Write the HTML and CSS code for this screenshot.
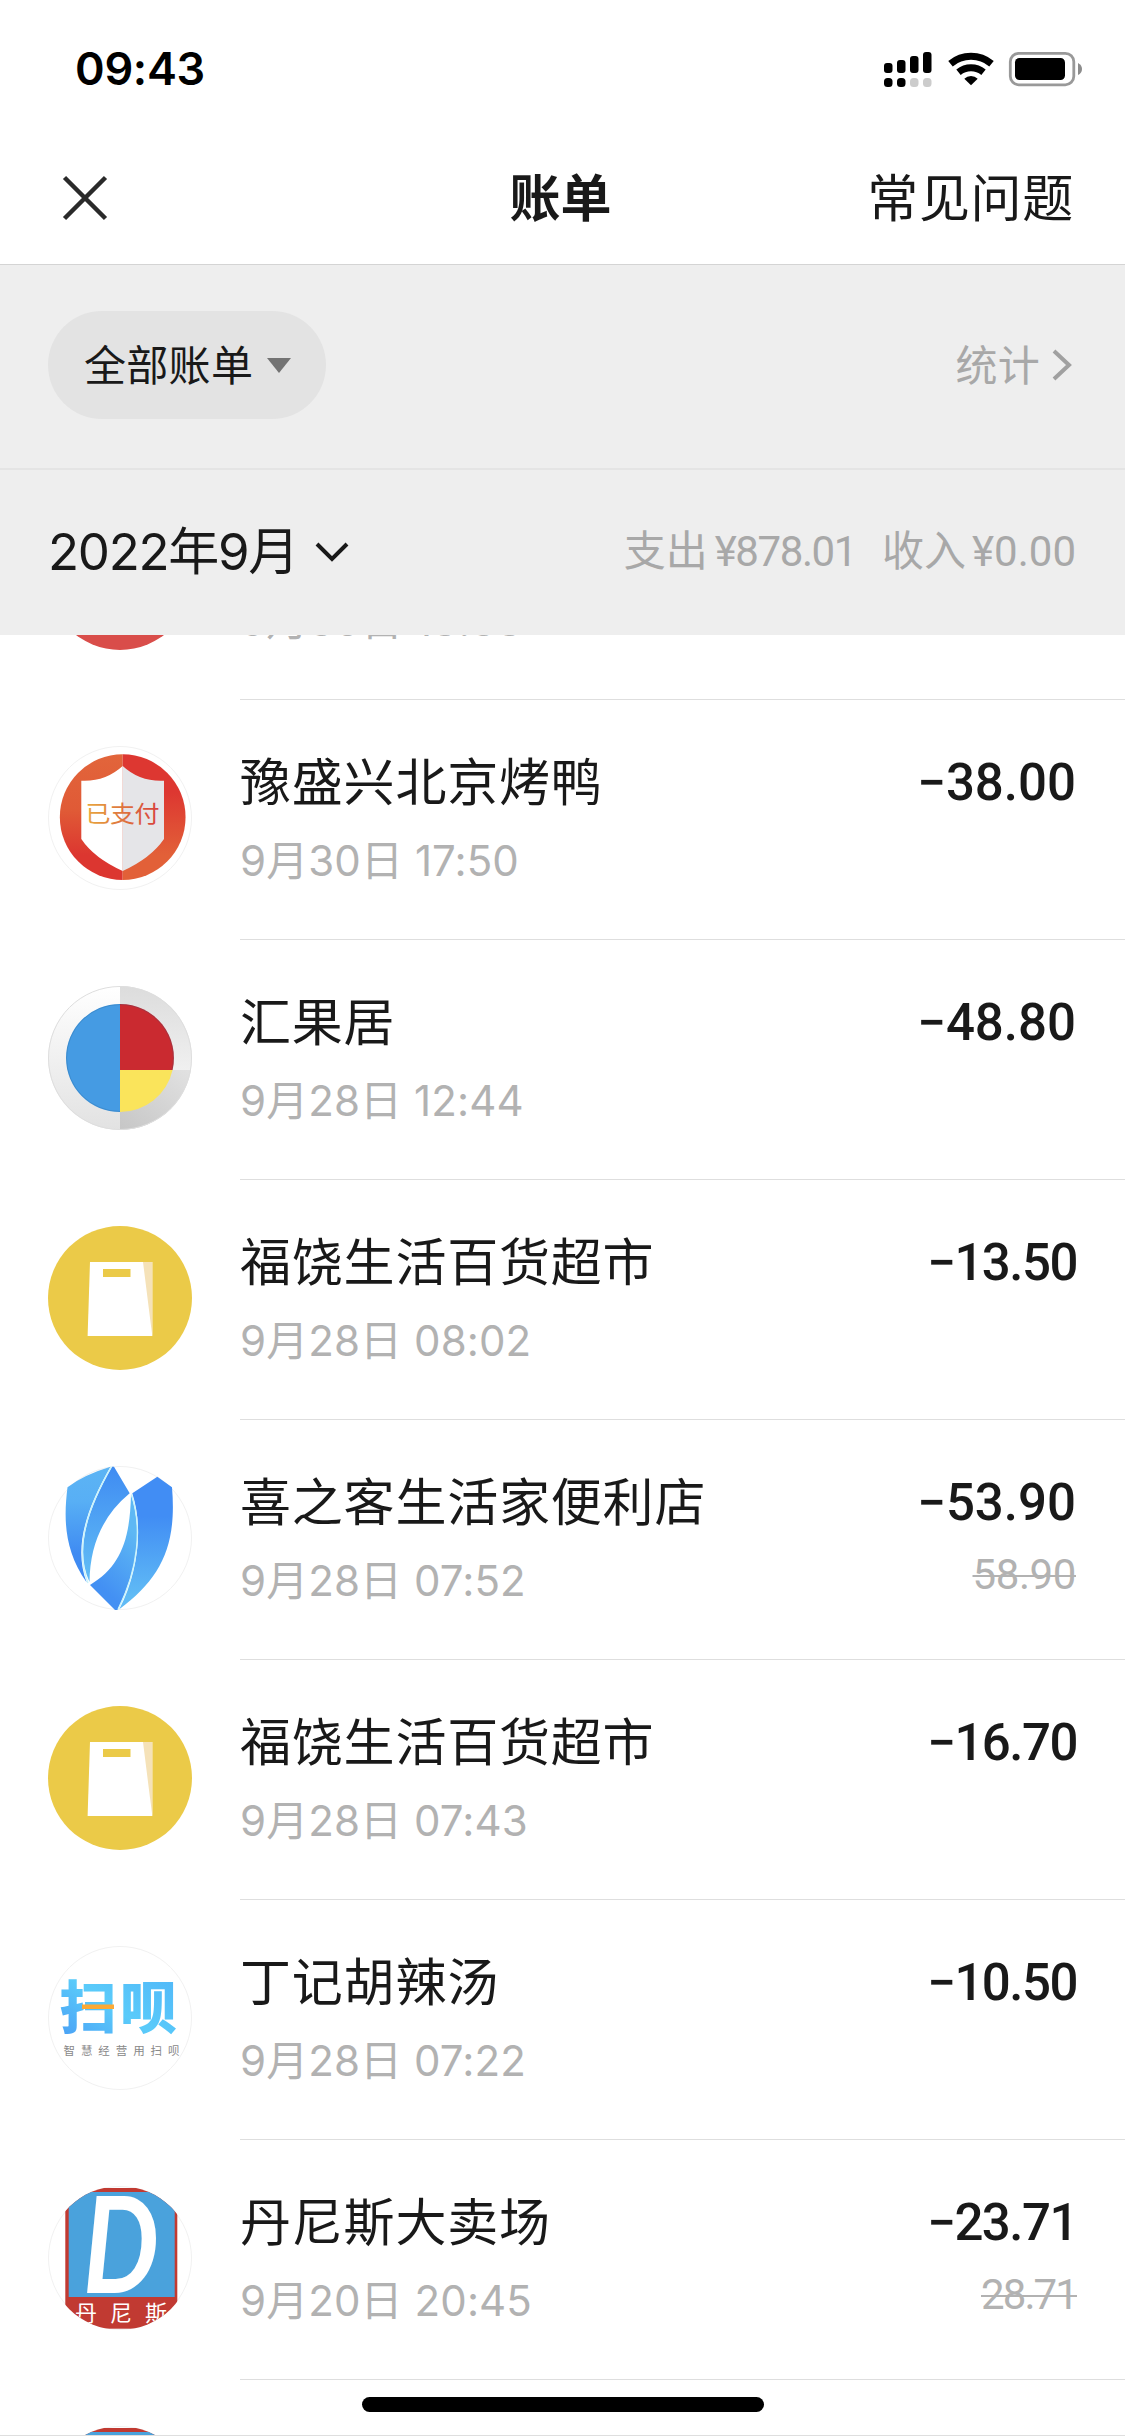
FILE: index.html
```html
<!DOCTYPE html>
<html lang="zh-CN">
<head>
<meta charset="utf-8">
<title>账单</title>
<link rel="stylesheet" href="styles.css">
</head>
<body>
<svg class="defs" aria-hidden="true">
  <defs>
    <linearGradient id="ringL" x1="0" y1="0" x2="0" y2="1"><stop offset="0" stop-color="#e2653b"/><stop offset=".45" stop-color="#e05a36"/><stop offset=".8" stop-color="#dc3630"/></linearGradient>
    <linearGradient id="ringR" x1="0" y1="0" x2="0" y2="1"><stop offset=".3" stop-color="#dd3731"/><stop offset=".8" stop-color="#e26038"/></linearGradient>
    <linearGradient id="paid"><stop offset="0" stop-color="#e9a83e"/><stop offset=".45" stop-color="#df7a3e"/><stop offset="1" stop-color="#d8403c"/></linearGradient>
    <linearGradient id="greyL" x1="0" y1="0" x2="0" y2="1"><stop offset="0" stop-color="#ffffff"/><stop offset="1" stop-color="#e2e2e2"/></linearGradient>
    <linearGradient id="greyR" x1="0" y1="0" x2="0" y2="1"><stop offset="0" stop-color="#dcdcdc"/><stop offset="1" stop-color="#f0f0f0"/></linearGradient>
    <linearGradient id="greyB" x1="1" y1="0" x2="0" y2="1"><stop offset="0" stop-color="#e2e2e2"/><stop offset="1" stop-color="#c6c6c6"/></linearGradient>
    <linearGradient id="leafA" x1="0" y1="0" x2="0" y2="1"><stop offset="0" stop-color="#5cb4f4"/><stop offset=".3" stop-color="#58aff5"/><stop offset=".75" stop-color="#3f8bf2"/></linearGradient>
    <linearGradient id="leafB" x1="0" y1="0" x2="0" y2="1"><stop offset="0" stop-color="#3f8bf2"/><stop offset=".9" stop-color="#5fbaf5"/></linearGradient>
    <linearGradient id="leafC" x1="0" y1="0" x2="0" y2="1"><stop offset=".3" stop-color="#418df4"/><stop offset=".9" stop-color="#60bbf5"/></linearGradient>
    <linearGradient id="leafD" x1=".7" y1="0" x2=".3" y2="1"><stop offset=".2" stop-color="#5eb8f4"/><stop offset=".85" stop-color="#4390f3"/></linearGradient>
    <linearGradient id="saobei" x1="0" y1="1" x2="1" y2="0"><stop offset="0" stop-color="#489bf5"/><stop offset=".45" stop-color="#5acbfa"/><stop offset="1" stop-color="#4fb4f8"/></linearGradient>
    <clipPath id="disc"><circle cx="72" cy="72" r="72"/></clipPath>
    <symbol id="bag" viewBox="0 0 144 144">
      <circle cx="72" cy="72" r="72" fill="#ebca48"/>
      <path d="M42 36H104.3V110H39.6Z" fill="#fff"/>
      <path d="M95 36H104.3V110Z" fill="#f5e2b8"/>
      <path d="M55 43H82.5V51H55Z" fill="#ebca48"/>
    </symbol>
    <symbol id="dennis" viewBox="0 0 144 144">
      <circle class="rim" cx="72" cy="72" r="71.5"/>
      <g clip-path="url(#disc)">
        <rect x="17.3" y="2" width="112" height="140.7" fill="#c13a32"/>
        <rect x="20.7" y="6" width="106" height="105" fill="#4aa2dc"/>
        <text class="dennis-d" transform="translate(35 107) scale(.8 1)">D</text>
        <text class="dennis-name" x="27 62 97" y="135">丹尼斯</text>
      </g>
    </symbol>
  </defs>
</svg>

<div class="screen">
  <header class="status">
    <span class="time">09:43</span>
    <svg class="indicators" viewBox="0 0 200 36" width="200" height="36">
      <rect x="1" y="12" width="8.5" height="10" rx="3"/><rect x="14" y="9" width="8.5" height="13" rx="3"/><rect x="27" y="5" width="8.5" height="17" rx="3"/><rect x="40" y="1" width="8.5" height="21" rx="3"/>
      <rect x="1" y="27" width="8.5" height="9" rx="3.5"/><rect x="14" y="27" width="8.5" height="9" rx="3.5"/><rect x="27" y="27" width="8.5" height="9" rx="3.5" fill="#ccc"/><rect x="40" y="27" width="8.5" height="9" rx="3.5" fill="#ccc"/>
      <g fill="none" stroke="#000" stroke-width="7"><path d="M67.5 12.7A32 32 0 0 1 108.5 12.7"/><path d="M75.5 21.2A20 20 0 0 1 100.5 21.2"/></g>
      <path d="M88 34.3L81.3 27.7A9.8 9.8 0 0 1 94.7 27.7Z"/>
      <rect x="127.3" y="2.3" width="63.5" height="31.5" rx="8.5" fill="none" stroke="#999" stroke-width="2.8"/>
      <rect x="132" y="7" width="50" height="22" rx="4.5"/>
      <path d="M195 12Q199 14 199 18T195 24Z" fill="#8c8c8c"/>
    </svg>
  </header>
  <nav class="nav">
    <svg class="close" viewBox="0 0 46 46" width="46" height="46"><path d="M2.5 2.5L43.5 43.5M43.5 2.5L2.5 43.5"/></svg>
    <h1 class="heading">账单</h1>
    <span class="faq">常见问题</span>
  </nav>
  <section class="filter">
    <div class="pill"><span>全部账单</span><svg width="24" height="15" viewBox="0 0 24 15"><path d="M0 0H24L12 15Z" fill="#737373"/></svg></div>
    <div class="stats"><span>统计</span><svg width="20" height="32" viewBox="0 0 20 32"><path d="M2 2L17 16L2 30"/></svg></div>
  </section>
  <section class="summary">
    <div class="month"><span>2022年9月</span><svg width="34" height="20" viewBox="0 0 34 20"><path d="M2 2L17 17L32 2"/></svg></div>
    <div class="totals"><span>支出<b class="num narrow">¥878.01</b></span><span>收入<b class="num">¥0.00</b></span></div>
  </section>

  <main class="list">
    <article class="row first">
      <svg class="logo" viewBox="0 0 144 144"><circle cx="72" cy="72" r="72" fill="#d94d4a"/></svg>
      <div class="body"><div class="info"><p class="name"></p><p class="date">9月30日 18:38</p></div></div>
    </article>
    <article class="row">
      <svg class="logo" viewBox="0 0 144 144">
        <circle class="rim" cx="72" cy="72" r="71.5"/>
        <path d="M74.7 8.3A62.8 62.8 0 0 0 74.7 134Z" fill="url(#ringL)"/><path d="M74.7 8.3A62.8 62.8 0 0 1 74.7 134Z" fill="url(#ringR)"/>
        <path d="M74.7 20Q57 36 33.3 34.7V93Q46 112 74.7 125Z" fill="#fff"/><path d="M74.7 20Q92 36 116 34.7V93Q103 112 74.7 125Z" fill="#e5e5e8"/>
        <text class="paid" transform="translate(37.5 75.5) scale(1 .9)" textLength="74" fill="url(#paid)">已支付</text>
      </svg>
      <div class="body"><div class="info"><p class="name">豫盛兴北京烤鸭</p><p class="date">9月30日 17:50</p></div><div class="amount"><p class="cost">−38.00</p></div></div>
    </article>
    <article class="row">
      <svg class="logo" viewBox="0 0 144 144">
        <g clip-path="url(#disc)"><path d="M0 0H72V144H0Z" fill="url(#greyL)"/><path d="M72 0H144V84H72Z" fill="url(#greyR)"/><path d="M72 84H144V144H72Z" fill="url(#greyB)"/></g>
        <path d="M72 18A54 54 0 0 0 72 126Z" fill="#459be3"/><path d="M72 18A54 54 0 0 1 124.6 84H72Z" fill="#ca2a30"/><path d="M72 84H124.6A54 54 0 0 1 72 126Z" fill="#fae45b"/>
        <path d="M72 125.5A53.5 53.5 0 0 1 72 18.5A53.5 53.5 0 0 1 124 84" fill="none" stroke="#1d5080" stroke-opacity=".22"/>
        <circle class="rim dark" cx="72" cy="72" r="71.5"/>
      </svg>
      <div class="body"><div class="info"><p class="name">汇果居</p><p class="date">9月28日 12:44</p></div><div class="amount"><p class="cost">−48.80</p></div></div>
    </article>
    <article class="row">
      <svg class="logo"><use href="#bag"/></svg>
      <div class="body"><div class="info"><p class="name">福饶生活百货超市</p><p class="date">9月28日 08:02</p></div><div class="amount"><p class="cost narrow">−13.50</p></div></div>
    </article>
    <article class="row">
      <svg class="logo" viewBox="0 0 144 144">
        <circle class="rim" cx="72" cy="72" r="71.5"/>
        <path d="M62.5 .7Q35 9 19.5 21.3C16 50 15 83 38.7 116.5C27 86 34 50 62.5 .7Z" fill="url(#leafA)"/>
        <path d="M66 .7L81.7 27.3Q42 60 41.5 116C28 86 36 50 64 .7Z" fill="url(#leafB)"/>
        <path d="M84.3 27.3L109.3 10.7L124 21.3C129 80 113 112 71.3 143.3C91 105 95 60 84.3 27.3Z" fill="url(#leafC)"/>
        <path d="M83 28.5C82 75 72 101 42 119L67 144H69.5C91 100 94 62 83 28.5Z" fill="url(#leafD)"/>
        <path d="M63.5 .7C35 50 28 86 40 117M83.5 28.5C94 60 91 102 70 143.5" fill="none" stroke="#c9f3fa" stroke-width="1.4"/>
      </svg>
      <div class="body"><div class="info"><p class="name">喜之客生活家便利店</p><p class="date">9月28日 07:52</p></div><div class="amount"><p class="cost">−53.90</p><p class="original">58.90</p></div></div>
    </article>
    <article class="row">
      <svg class="logo"><use href="#bag"/></svg>
      <div class="body"><div class="info"><p class="name">福饶生活百货超市</p><p class="date">9月28日 07:43</p></div><div class="amount"><p class="cost narrow">−16.70</p></div></div>
    </article>
    <article class="row">
      <svg class="logo" viewBox="0 0 144 144">
        <circle class="rim" cx="72" cy="72" r="71.5"/>
        <text class="saobei" x="11.5 72" y="81.5" fill="url(#saobei)">扫呗</text>
        <path d="M34 58.5H66V63H34Z" fill="#fba935"/>
        <text class="slogan" x="15.5" y="108.7" textLength="116">智慧经营用扫呗</text>
      </svg>
      <div class="body"><div class="info"><p class="name">丁记胡辣汤</p><p class="date">9月28日 07:22</p></div><div class="amount"><p class="cost narrow">−10.50</p></div></div>
    </article>
    <article class="row">
      <svg class="logo"><use href="#dennis"/></svg>
      <div class="body"><div class="info"><p class="name">丹尼斯大卖场</p><p class="date">9月20日 20:45</p></div><div class="amount"><p class="cost narrow">−23.71</p><p class="original narrow">28.71</p></div></div>
    </article>
    <article class="row">
      <svg class="logo"><use href="#dennis"/></svg>
      <div class="body"></div>
    </article>
  </main>
  <div class="home-indicator"></div>
</div>
</body>
</html>
```
FILE: styles.css
```css
* { box-sizing: border-box; margin: 0; padding: 0; }
body { background: #fff; }
.defs { position: absolute; width: 0; height: 0; }
.screen {
  position: relative;
  display: flex;
  flex-direction: column;
  width: 1125px;
  height: 2436px;
  overflow: hidden;
  color: #191919;
  background: #fff;
  border-bottom: 1px solid #dedede;
  font-family: Inter, "Noto Sans CJK SC", sans-serif;
  font-size: 42px;
  white-space: nowrap;
}
.status {
  flex: none;
  display: flex;
  justify-content: space-between;
  align-items: flex-start;
  height: 132px;
  padding: 51px 42px 0 75px;
}
.time { font-size: 45px; font-weight: 600; line-height: 36px; color: #000; letter-spacing: -.3px; }
.nav {
  flex: none;
  display: grid;
  grid-template-columns: 1fr auto 1fr;
  align-items: center;
  height: 133px;
  padding: 0 51px 0 62px;
  border-bottom: 1px solid #d4d4d4;
  font-size: 51px;
  line-height: 60px;
}
.close { fill: none; stroke: #2a2a2a; stroke-width: 4.5; }
.heading { font-size: 51px; font-weight: 600; padding-top: 2px; margin: 0 4px 0 -11px; }
.faq { justify-self: end; padding-top: 2px; letter-spacing: .7px; }
.filter, .summary {
  flex: none;
  display: flex;
  justify-content: space-between;
  background: #eee;
}
.filter { height: 205px; padding: 46px 53px 0 48px; border-bottom: 2px solid #e4e4e4; }
.pill {
  display: flex;
  align-items: center;
  gap: 14px;
  width: 278px;
  height: 108px;
  padding-left: 36px;
  border-radius: 54px;
  background: #e3e3e3;
}
.pill span, .stats span { padding-bottom: 5px; letter-spacing: .3px; }
.stats {
  display: flex;
  align-items: center;
  gap: 12px;
  height: 108px;
  color: #a8a8a8;
}
.stats path, .month path { fill: none; stroke: #a0a0a0; stroke-width: 4; }
.summary { height: 165px; padding: 50px 49px 0 48px; line-height: 64px; }
.month { display: flex; align-items: center; gap: 17px; height: 64px; font-size: 51px; letter-spacing: -1.3px; }
.month path { stroke: #191919; }
.totals { display: flex; gap: 26px; height: 64px; color: #a8a8a8; }
.totals span { margin-top: -1px; }
.num { margin-left: 6px; font-family: Roboto, sans-serif; font-weight: 400; }
.num.narrow { margin-left: 7px; letter-spacing: -1.4px; }
.list { flex: none; height: 1801px; overflow: hidden; }
.row { display: flex; height: 240px; padding-left: 48px; }
.first { margin-top: -175px; }
.logo { flex: none; width: 144px; height: 144px; margin: 46px 48px 0 0; }
.body {
  flex: 1;
  display: flex;
  justify-content: space-between;
  padding: 53px 49px 0 0;
  border-bottom: 1px solid #dedede;
}
.name { height: 60px; font-size: 51px; line-height: 60px; letter-spacing: .8px; }
.date { margin-top: 21px; color: #b2b2b2; line-height: 54px; letter-spacing: .1px; }
.amount { text-align: right; font-family: Roboto, sans-serif; }
.cost { font-size: 51px; font-weight: 500; line-height: 60px; }
.cost.narrow { letter-spacing: -1.5px; margin-right: -1px; }
.original { margin-top: 15px; color: #b2b2b2; line-height: 54px; letter-spacing: -.4px; text-decoration: line-through; text-decoration-thickness: 2px; }
.original.narrow { letter-spacing: -1.9px; margin-right: -1px; }
.rim { fill: #fff; stroke: #f1f1f1; stroke-width: 1; }
.rim.dark { fill: none; stroke: #dedede; }
.paid { font: 400 25px "Noto Sans CJK SC", sans-serif; }
.saobei { font: 900 57px "Noto Sans CJK SC", sans-serif; }
.slogan { font: 400 11.5px "Noto Sans CJK SC", sans-serif; fill: #888; }
.dennis-d { font: italic 700 134px Lato, sans-serif; fill: #fff; }
.dennis-name { font: 400 22px "Noto Sans CJK SC", sans-serif; fill: #fff; }
.home-indicator {
  position: absolute;
  left: 362px;
  top: 2397px;
  width: 402px;
  height: 15px;
  border-radius: 8px;
  background: #000;
}
```
